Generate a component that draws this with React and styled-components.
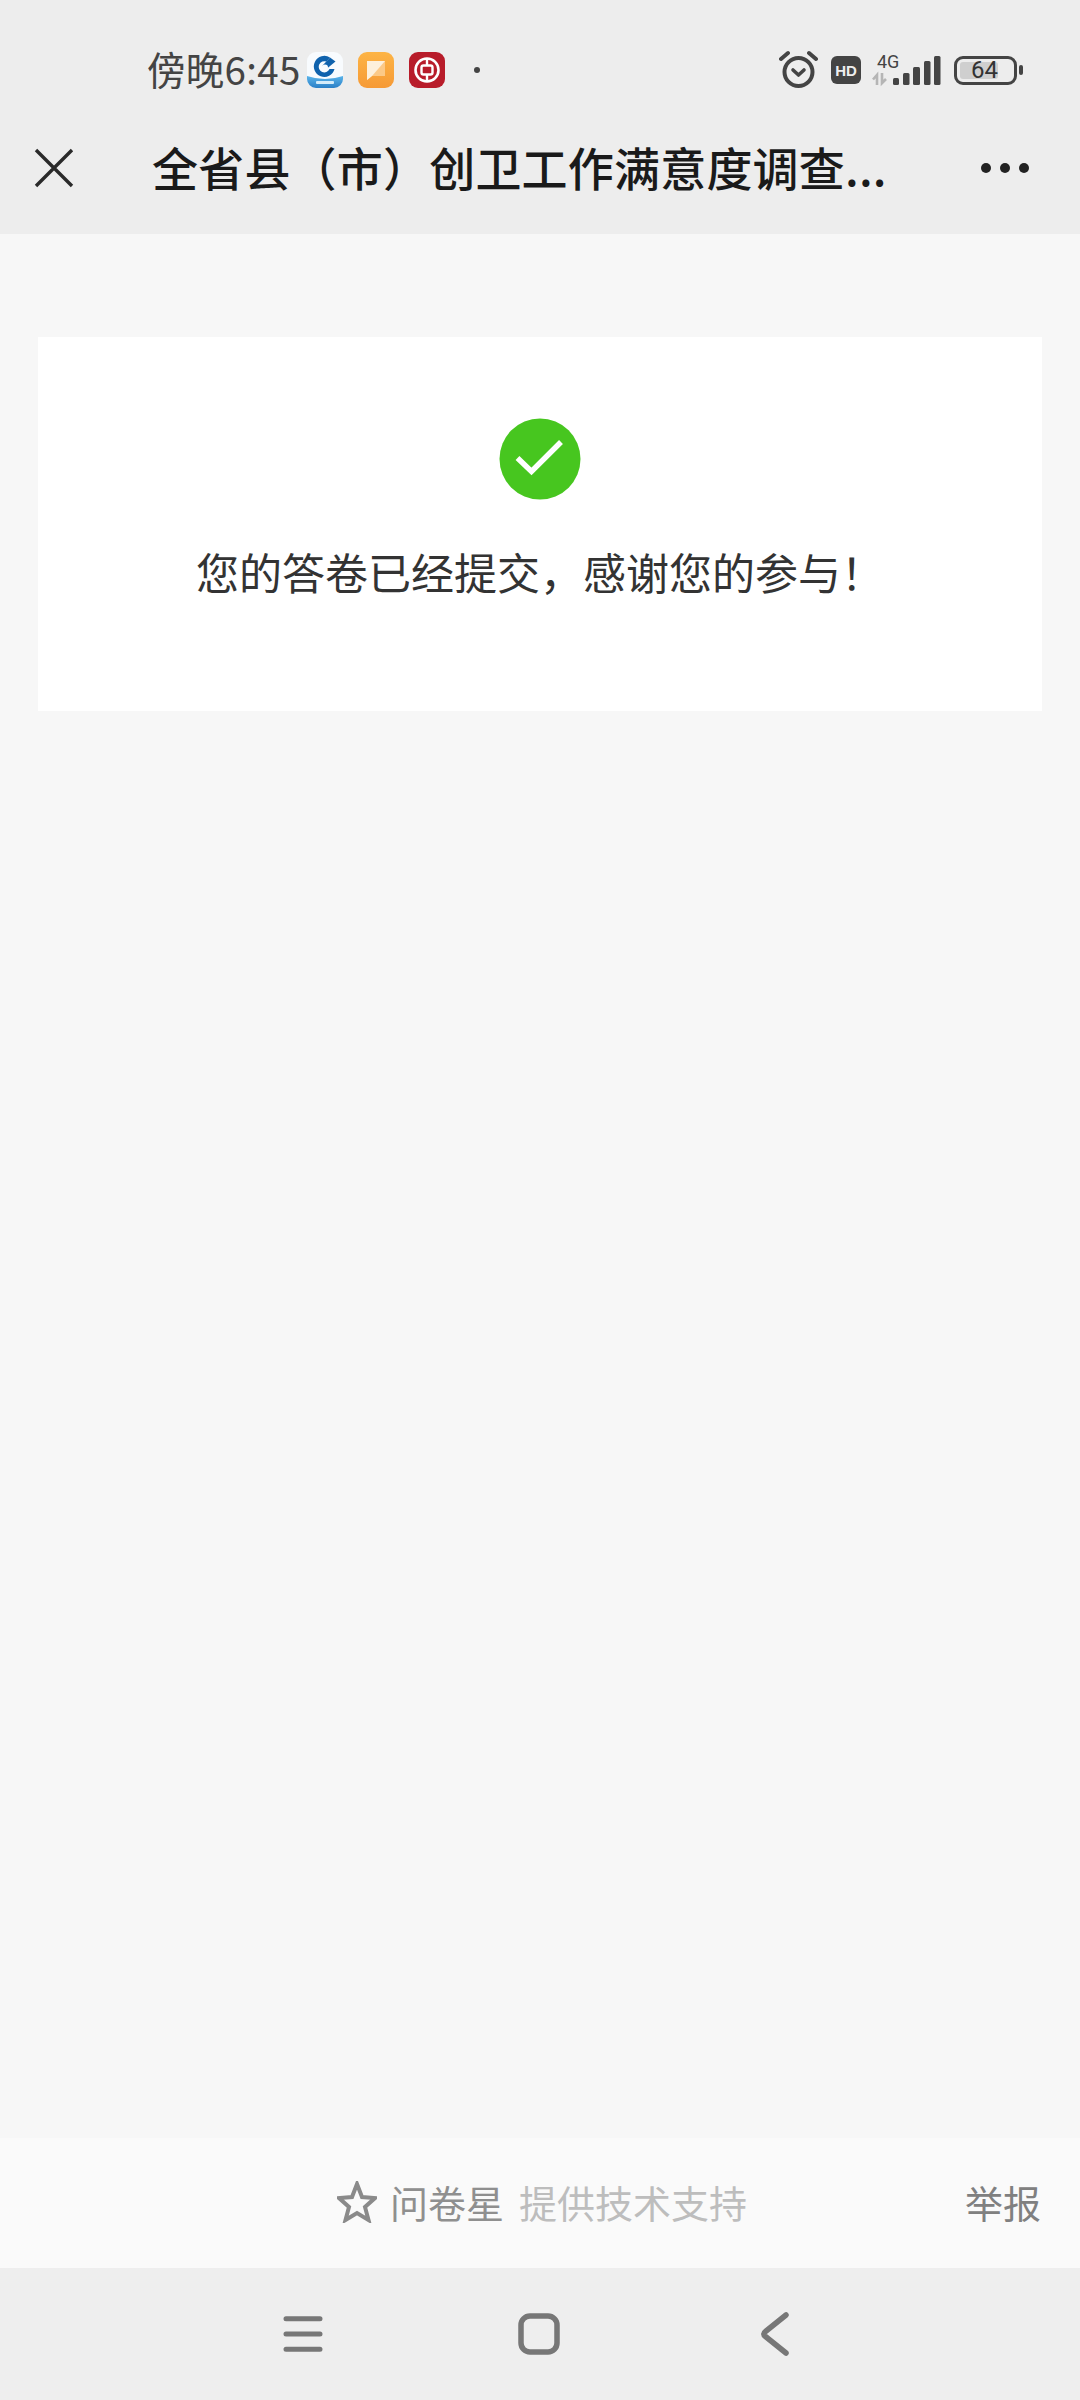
import React from 'react';
import styled, { createGlobalStyle } from 'styled-components';

const GlobalStyle = createGlobalStyle`
  html, body {
    margin: 0;
    padding: 0;
    background: #f7f7f7;
  }
  * {
    box-sizing: border-box;
  }
`;

const CJK = `"Noto Sans CJK SC", "Noto Sans", sans-serif`;

const Page = styled.div`
  width: 1080px;
  height: 2400px;
  display: flex;
  flex-direction: column;
  background: #f7f7f7;
  font-family: ${CJK};
  overflow: hidden;
`;

const Header = styled.header`
  height: 234px;
  background: #ededed;
  flex-shrink: 0;
`;

const StatusBar = styled.div`
  height: 116px;
  padding: 24px 57px 0 147px;
  display: flex;
  align-items: center;
`;

const Time = styled.span`
  font-size: 38.5px;
  line-height: 48px;
  margin-bottom: 5px;
  color: #444;
  letter-spacing: 0.3px;
  white-space: nowrap;
`;

const AppIcons = styled.div`
  margin-left: 6px;
  display: flex;
  align-items: center;
  gap: 15px;
`;

const AppIcon = styled.svg`
  width: 36px;
  height: 36px;
  display: block;
`;

const Dot = styled.span`
  width: 6px;
  height: 6px;
  margin-left: 29px;
  border-radius: 50%;
  background: #444;
`;

const StatusIcons = styled.svg`
  width: 162px;
  height: 40px;
  margin-left: auto;
  display: block;
`;

const Battery = styled.div`
  position: relative;
  width: 63px;
  height: 29px;
  margin-left: 13px;
  border: 3.5px solid #444;
  border-radius: 9px;
  padding: 3px;
  display: flex;
  align-items: center;
`;

const BatteryFill = styled.span`
  width: 38px;
  height: 100%;
  background: #cfcfcf;
  border-radius: 3px;
`;

const BatteryLabel = styled.span`
  position: absolute;
  left: 0;
  right: 2px;
  top: -3px;
  text-align: center;
  font-family: Roboto, sans-serif;
  font-size: 24px;
  font-weight: 400;
  line-height: 28px;
  color: #333;
`;

const BatteryNub = styled.span`
  width: 4px;
  height: 10px;
  margin-left: 2px;
  border-radius: 2px;
  background: #444;
`;

const TitleBar = styled.div`
  height: 104px;
  padding: 0 50px 0 34px;
  display: flex;
  align-items: center;
`;

const CloseButton = styled.svg`
  width: 40px;
  height: 40px;
  flex-shrink: 0;
`;

const Title = styled.h1`
  flex: 1;
  margin: 0 0 5px 78px;
  font-size: 46px;
  line-height: 64px;
  font-weight: 500;
  letter-spacing: 0.2px;
  color: #1a1a1a;
  white-space: nowrap;
`;

const MoreButton = styled.svg`
  width: 50px;
  height: 12px;
  flex-shrink: 0;
`;

const Content = styled.main`
  flex: 1;
  padding: 103px 38px 0;
`;

const Card = styled.section`
  height: 374px;
  background: #fff;
  padding-top: 81px;
  display: flex;
  flex-direction: column;
  align-items: center;
`;

const CheckIcon = styled.svg`
  width: 82px;
  height: 82px;
  display: block;
`;

const Message = styled.p`
  margin: 38px 0 0;
  font-size: 43px;
  line-height: 66px;
  color: #333;
  white-space: nowrap;
`;

const Footer = styled.footer`
  height: 130px;
  flex-shrink: 0;
  background: #fafafa;
  padding: 0 39px 3px 337px;
  display: flex;
  align-items: center;
  font-size: 38px;
`;

const StarIcon = styled.svg`
  width: 40px;
  height: 42px;
  margin-right: 13px;
`;

const Brand = styled.span`
  color: #8f8f8f;
  margin-right: 15px;
`;

const Support = styled.span`
  color: #bdbdbd;
`;

const Report = styled.span`
  margin-left: auto;
  color: #808080;
`;

const NavBar = styled.nav`
  height: 132px;
  flex-shrink: 0;
  background: #eeeeee;
  display: flex;
  align-items: center;
  justify-content: center;
  gap: 192px;
  padding-right: 2px;
`;

const NavIcon = styled.svg`
  width: 44px;
  height: 44px;
  display: block;
`;

export default function App() {
  return (
    <Page>
      <GlobalStyle />
      <Header>
        <StatusBar>
          <Time>傍晚6:45</Time>
          <AppIcons>
            <AppIcon viewBox="0 0 36 36">
              <defs>
                <linearGradient id="ccbBand" x1="0" y1="0" x2="0" y2="1">
                  <stop offset="0" stopColor="#5ab4ea" />
                  <stop offset="1" stopColor="#2a7fc6" />
                </linearGradient>
              </defs>
              <rect width="36" height="36" rx="9" fill="#f8fbfe" />
              <path d="M0 24 Q18 30 36 24 V27 A9 9 0 0 1 27 36 H9 A9 9 0 0 1 0 27 Z" fill="url(#ccbBand)" />
              <path d="M23 5.5 A10.5 10.5 0 1 0 27.5 17 L22.5 17 A5.6 5.6 0 1 1 19.5 9.6 Z" fill="#0f62ad" />
              <path d="M23 5.5 L28.5 9.5 L20 16.5 L15.5 13.5 Z" fill="#0f62ad" />
              <circle cx="18" cy="15.5" r="3" fill="#f8fbfe" />
              <rect x="9" y="29" width="18" height="3" rx="1" fill="#d4ecfa" />
            </AppIcon>
            <AppIcon viewBox="0 0 36 36">
              <defs>
                <linearGradient id="note" x1="0" y1="0" x2="0" y2="1">
                  <stop offset="0" stopColor="#fdb445" />
                  <stop offset="1" stopColor="#f69a36" />
                </linearGradient>
              </defs>
              <rect width="36" height="36" rx="9" fill="url(#note)" />
              <path d="M9 9 H27 V24 H14 L9 28 Z" fill="#fcc987" />
              <path d="M9 9 H27 L14 24 L9 28 Z" fill="#fdf0dc" />
            </AppIcon>
            <AppIcon viewBox="0 0 36 36">
              <rect width="36" height="36" rx="9" fill="#b81c2a" />
              <circle cx="18" cy="18" r="11.5" fill="none" stroke="#fff" strokeWidth="2.6" />
              <rect x="12.5" y="13.5" width="11" height="9" rx="2" fill="none" stroke="#fff" strokeWidth="2.4" />
              <path d="M18 6.5 V13.5 M18 22.5 V29.5" stroke="#fff" strokeWidth="2.4" />
            </AppIcon>
          </AppIcons>
          <Dot />
          <StatusIcons viewBox="0 0 162 40" fill="none">
            <path d="M2 9 L9 3 M30 3 L37 9" stroke="#444" strokeWidth="4" strokeLinecap="round" />
            <circle cx="19.5" cy="22" r="14" stroke="#444" strokeWidth="4" />
            <path d="M14 20 L19.5 25 L25 20" stroke="#444" strokeWidth="3.6" strokeLinecap="round" strokeLinejoin="round" />
            <rect x="52" y="6" width="30" height="28" rx="6" fill="#444" />
            <text x="67" y="25.5" textAnchor="middle" fontFamily="Liberation Sans, sans-serif" fontWeight="700" fontSize="15" fill="#eee">HD</text>
            <text x="98" y="17.5" fontFamily="Roboto, sans-serif" fontSize="18" fill="#444">4G</text>
            <path d="M98 35 L98 25 L94 29.5 M103 23 L103 33 L107 29" stroke="#b5b5b5" strokeWidth="2.6" />
            <rect x="114" y="28" width="6" height="7" rx="1.5" fill="#444" />
            <rect x="124" y="23" width="6.5" height="12" rx="1.5" fill="#444" />
            <rect x="134" y="17" width="7" height="18" rx="1.5" fill="#444" />
            <rect x="145" y="11" width="6.5" height="24" rx="1.5" fill="#444" />
            <rect x="155" y="6" width="6.5" height="29" rx="1.5" fill="#444" />
          </StatusIcons>
          <Battery>
            <BatteryFill />
            <BatteryLabel>64</BatteryLabel>
          </Battery>
          <BatteryNub />
        </StatusBar>
        <TitleBar>
          <CloseButton viewBox="0 0 40 40" fill="none">
            <path d="M2 2 L38 38 M38 2 L2 38" stroke="#2a2a2a" strokeWidth="3.4" />
          </CloseButton>
          <Title>全省县（市）创卫工作满意度调查...</Title>
          <MoreButton viewBox="0 0 50 12">
            <circle cx="6" cy="6" r="5" fill="#222" />
            <circle cx="25" cy="6" r="5" fill="#222" />
            <circle cx="44" cy="6" r="5" fill="#222" />
          </MoreButton>
        </TitleBar>
      </Header>
      <Content>
        <Card>
          <CheckIcon viewBox="0 0 82 82">
            <circle cx="41" cy="41" r="40.5" fill="#47c61f" />
            <path d="M18.5 40 L32.5 53.5 L62 24" fill="none" stroke="#fff" strokeWidth="5.5" />
          </CheckIcon>
          <Message>您的答卷已经提交，感谢您的参与！</Message>
        </Card>
      </Content>
      <Footer>
        <StarIcon viewBox="0 0 40 42" fill="none">
          <path d="M20 3 L25 16 L38 17 L28 26 L31.5 39 L20 32 L8.5 39 L12 26 L2 17 L15 16 Z" stroke="#8a8a8a" strokeWidth="4" strokeLinejoin="miter" />
        </StarIcon>
        <Brand>问卷星</Brand>
        <Support>提供技术支持</Support>
        <Report>举报</Report>
      </Footer>
      <NavBar>
        <NavIcon viewBox="0 0 44 44" fill="none">
          <path d="M5 6.7 H39 M5 22 H39 M5 37.3 H39" stroke="#777" strokeWidth="5" strokeLinecap="round" />
        </NavIcon>
        <NavIcon viewBox="0 0 44 44" fill="none">
          <rect x="4" y="4" width="36" height="36" rx="9" stroke="#777" strokeWidth="5.5" />
        </NavIcon>
        <NavIcon viewBox="0 0 44 44" fill="none">
          <path d="M33 3 L12.5 19.5 Q9 22 12.5 24.5 L33 41" stroke="#777" strokeWidth="5.5" strokeLinecap="round" />
        </NavIcon>
      </NavBar>
    </Page>
  );
}
